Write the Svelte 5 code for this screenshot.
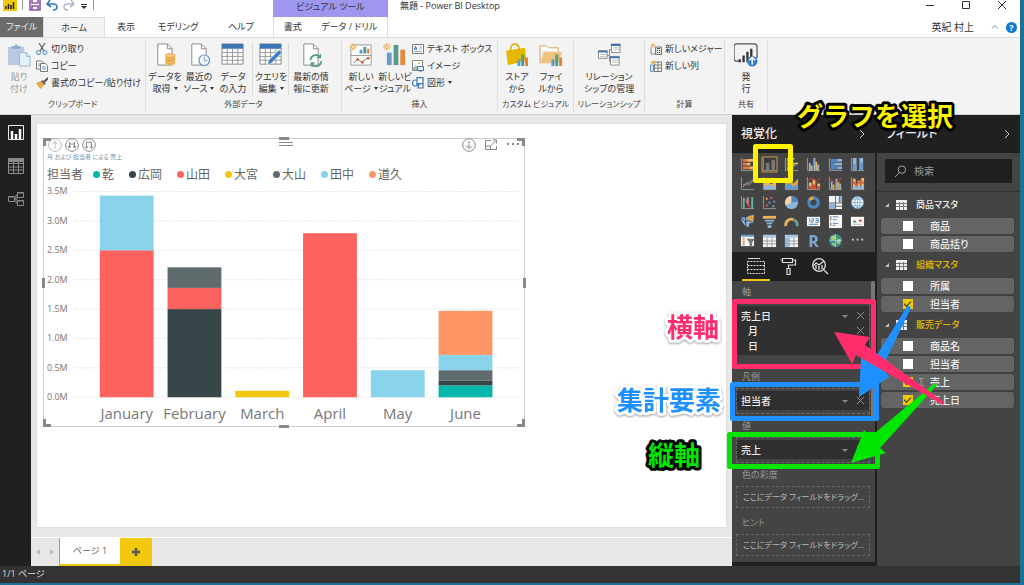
<script>
  /* ---------------------------------------------------------------------------------------------
   *  Report designer window: ribbon, report canvas, visualization pane and field list
   *-------------------------------------------------------------------------------------------- */

  const SHEET = '<path d="M5 1h10l5 5v17H5z" fill="#fff" stroke="#8a8a8a"/><path d="M15 1v5h5" fill="none" stroke="#8a8a8a"/>'
  const SPARK = '<path d="M4 0v8M0 4h8M1 1l6 6M7 1L1 7" stroke="#e9a94b"/><circle cx="4" cy="4" r="1.600" fill="#fff3dc" stroke="#e9a94b"/>'
  const MINI_BARS = '<path d="M13 17h3v7h-3z" fill="#5b9bd5"/><path d="M17 12h3v12h-3z" fill="#4f9d86"/><path d="M21 15h3v9h-3z" fill="#e5823a"/>'

  // 24 x 24 icons of the ribbon's tall buttons
  const bigIcons = {
    paste: '<path d="M1 4h17v19H1z" fill="#b9c9e4"/><path d="M5 3h3q1.500-4 3 0h3v3H5z" fill="#8fa9cf"/><path d="M13 10h7l4 4v10H13z" fill="#e4f1f6" stroke="#93b9cd"/><path d="M20 10v4h4" fill="none" stroke="#93b9cd"/>',
    getData: SHEET + '<path d="M13 13v9q5 3 10 0v-9z" fill="#efb455"/><ellipse cx="18" cy="13" rx="5" ry="2" fill="#f8d08c" stroke="#dfa040"/><path d="M13 17q5 3 10 0" fill="none" stroke="#dfa040"/>',
    recent: SHEET + '<circle cx="18" cy="18" r="5.500" fill="#f7fbff" stroke="#6f94c2" stroke-width="1.300"/><path d="M18 14v4.500h3.500" fill="none" stroke="#6f94c2"/>',
    enter: '<path d="M1 1h22v21H1z" fill="#fff" stroke="#888"/><path d="M1 1h22v5H1z" fill="#3b76b5"/><path d="M1 10h22M1 14h22M1 18h22M6.500 6v16M12 6v16M17.500 6v16" stroke="#999"/>',
    query: '<path d="M1 1h22v21H1z" fill="#fff" stroke="#888"/><path d="M1 1h22v5H1z" fill="#3b76b5"/><path d="M1 10h22M1 14h22M1 18h22M6.500 6v16M12 6v16M17.500 6v16" stroke="#999"/><path d="M9 23l1-5L21 7l3 3-11 11z" fill="#3b7fc4" stroke="#fff" stroke-width=".7"/>',
    refresh: SHEET + '<path d="M12 18a5.500 5.500 0 0 1 10-3M23 19a5.500 5.500 0 0 1-10 3" fill="none" stroke="#55a07c" stroke-width="2"/><path d="M23 11v5h-5zM12 25v-5h5z" fill="#55a07c"/>',
    newPage: '<path d="M4 2h19v21H2V6" fill="#fff" stroke="#999"/><path d="M2 13h21" stroke="#999"/><path d="M11 7h3v4h-3z" fill="#5b9bd5"/><path d="M15 4h3v7h-3z" fill="#4f9d86"/><path d="M19 6h2v5h-2z" fill="#d8743a"/><path d="M5 21l4-4 4 3 4-3 4-2" fill="none" stroke="#777"/><circle cx="9" cy="17" r="1.500" fill="#d8643a"/><circle cx="14" cy="20" r="1.500" fill="#d8643a"/><circle cx="20" cy="16" r="1.500" fill="#d8643a"/>' + SPARK,
    newVisual: '<path d="M4 10h5v13H4z" fill="#6a9bd0"/><path d="M11 2h5v21h-5z" fill="#569b87"/><path d="M18 7h5v16h-5z" fill="#e5893f"/>' + SPARK,
    store: '<path d="M1 8l20-3 1 14-19 4z" fill="#e6b800"/><path d="M6 10q-1-9 4-9t5 8" fill="none" stroke="#d9a900" stroke-width="1.500"/>' + MINI_BARS,
    file: '<path d="M1 6V3h7l2 2h10v5" fill="#fff" stroke="#d9a35a"/><path d="M1 21V5" stroke="#d9a35a"/><path d="M1 21L5 9h19l-4 12z" fill="#efc27f"/>' + MINI_BARS,
    relation: '<path d="M9 13h4V7h3M13 13v6h2" fill="none" stroke="#888"/><path d="M1.500 8h9v8h-9zM15 1h9v9h-9zM14 14h9v9h-9z" fill="#fff" stroke="#888"/><path d="M1 8h10v2H1zM14.500 1h10v2h-10zM13.500 14h10v2h-10z" fill="#3b76b5"/><path d="M3 12h6M3 14h6M17 5h6M17 7h6M16 18h6M16 20h6" stroke="#bbb"/>',
    publish: '<path d="M5 19H3q-3 0-3-3V4q0-3 3-3h18q3 0 3 3v12" fill="none" stroke="#555" stroke-width="1.300"/><path d="M6 17v3M10 13v7M14 9v11M18 6v9" stroke="#333" stroke-width="2.400"/><circle cx="19" cy="19" r="5.500" fill="#3a7fc1"/><path d="M19 22.500v-7M16 18l3-3 3 3" fill="none" stroke="#fff" stroke-width="1.500"/>'
  }

  // 12 x 12 icons of the ribbon's one-line buttons
  const smallIcons = {
    cut: '<path d="M3 0l5 8M9 0L4 8" stroke="#666" stroke-width="1.300"/><circle cx="2.500" cy="9.500" r="2" fill="none" stroke="#4d88c4"/><circle cx="9" cy="9.500" r="2" fill="none" stroke="#4d88c4"/>',
    copy: '<path d="M.5 1h5l2 2v6h-7z" fill="#fff" stroke="#777"/><path d="M4.500 3.500h5l2 2v6h-7z" fill="#fff" stroke="#777"/><path d="M6 7h4M6 9h4M2 4h2M2 6h2" stroke="#5b8fc9"/>',
    brush: '<path d="M0 6l5-2 3 4-3 4q-3-2-5-6z" fill="#e9a94b"/><path d="M5 4l2-1 3 4-2 1z" fill="#666"/><path d="M8 5l4-4" stroke="#555" stroke-width="2"/>',
    textbox: '<path d="M.5 1.500h11v9H.5z" fill="#fff" stroke="#777"/><path d="M2 7l1.500-4L5 7M2.500 6h2" fill="none" stroke="#3b76b5"/><path d="M7 4h3M7 6h3M2 8.500h8" stroke="#aaa"/>',
    image: '<path d="M.5.500h10v10H.5z" fill="#fff" stroke="#888"/><path d="M1 8l3-3 3 3v2H1z" fill="#9cc3b5"/><circle cx="7" cy="3" r="1" fill="#e9a94b"/><path d="M5.500 6.500h6v4h-6z" fill="#e8f2fb" stroke="#3b76b5"/><path d="M7 12h3" stroke="#3b76b5"/>',
    shapes: '<circle cx="3.500" cy="6" r="3" fill="#fff" stroke="#3b76b5" stroke-width="1.200"/><path d="M5 .600h6v6H5z" fill="#fff" stroke="#3b76b5" stroke-width="1.200"/><path d="M4 7h3l-1 4h5V7" fill="none" stroke="#3b76b5" stroke-width="1.200"/>',
    measure: '<path d="M1 4v7h4" fill="none" stroke="#888"/><path d="M5.500 4h6v7.500h-6z" fill="#ddd" stroke="#777"/><path d="M7 5.500h3M7 7.500h1M9 7.500h1M7 9.500h1M9 9.500h1" stroke="#555"/><path d="M3 0v5M.5 2.500h5M1 1l4 3M5 1L1 4" stroke="#e9a94b" stroke-width=".7"/>',
    column: '<path d="M4.500 2h7v9.500h-7z" fill="#fff" stroke="#777"/><path d="M4 5h8M4 8h8M8 2v9" stroke="#777"/><path d="M.5 5h3v6.500h-3z" fill="#cfe3f3" stroke="#6a9bd0"/><path d="M3 0v5M.5 2.500h5M1 1l4 3M5 1L1 4" stroke="#e9a94b" stroke-width=".7"/>'
  }

  const ribbon = [
    {
      name: 'クリップボード',
      kind: 'clipboard',
      big: [{ icon: 'paste', lines: ['貼り', '付け'], disabled: true }],
      small: [
        { icon: 'cut', label: '切り取り' },
        { icon: 'copy', label: 'コピー' },
        { icon: 'brush', label: '書式のコピー/貼り付け' }
      ]
    },
    {
      name: '外部データ',
      kind: 'external',
      big: [
        { icon: 'getData', lines: ['データを', '取得'], menu: true },
        { icon: 'recent', lines: ['最近の', 'ソース'], menu: true },
        { icon: 'enter', lines: ['データ', 'の入力'] },
        { icon: 'query', lines: ['クエリを', '編集'], menu: true, split: true },
        { icon: 'refresh', lines: ['最新の情', '報に更新'], split: true, wide: true }
      ]
    },
    {
      name: '挿入',
      kind: 'insert',
      big: [
        { icon: 'newPage', lines: ['新しい', 'ページ'], menu: true },
        { icon: 'newVisual', lines: ['新しいビ', 'ジュアル'] }
      ],
      small: [
        { icon: 'textbox', label: 'テキスト ボックス' },
        { icon: 'image', label: 'イメージ' },
        { icon: 'shapes', label: '図形', menu: true }
      ]
    },
    {
      name: 'カスタム ビジュアル',
      kind: 'custom',
      big: [
        { icon: 'store', lines: ['ストア', 'から'] },
        { icon: 'file', lines: ['ファイ', 'ルから'] }
      ]
    },
    {
      name: 'リレーションシップ',
      kind: 'relations',
      big: [{ icon: 'relation', lines: ['リレーション', 'シップの管理'], wide: true }]
    },
    {
      name: '計算',
      kind: 'calc',
      small: [
        { icon: 'measure', label: '新しいメジャー' },
        { icon: 'column', label: '新しい列' }
      ]
    },
    { name: '共有', kind: 'share', big: [{ icon: 'publish', lines: ['発', '行'] }] }
  ]

  const people = [
    { name: '乾', color: '#01b8aa' },
    { name: '広岡', color: '#374649' },
    { name: '山田', color: '#fd625e' },
    { name: '大宮', color: '#f2c80f' },
    { name: '大山', color: '#5f6b6d' },
    { name: '田中', color: '#8ad4eb' },
    { name: '道久', color: '#fe9666' }
  ]

  // sales per month, stacked bottom up: [index in people, millions]
  const months = [
    { name: 'January', parts: [[2, 2.5], [5, 0.93]] },
    { name: 'February', parts: [[1, 1.5], [2, 0.36], [4, 0.35]] },
    { name: 'March', parts: [[3, 0.11]] },
    { name: 'April', parts: [[2, 2.79]] },
    { name: 'May', parts: [[5, 0.46]] },
    { name: 'June', parts: [[0, 0.2], [1, 0.08], [4, 0.18], [5, 0.26], [6, 0.75]] }
  ]

  const ticks = [0, 0.5, 1, 1.5, 2, 2.5, 3, 3.5]
  const BASE = 212
  const UNIT = 59
  const bars = months.map((month, i) => {
    let total = 0
    const rects = month.parts.map(([who, value]) => {
      total += value
      return { y: BASE - total * UNIT, height: value * UNIT, color: people[who].color }
    })
    return { name: month.name, x: 56 + i * 68, rects }
  })

  const AXES = '<path d="M1.500 1v13.500H15" fill="none" stroke="#999"/>'
  const GRID = '<path d="M1 2h14v13H1z" fill="#f4f4f4"/><path d="M1 2h14v3H1z" fill="#a8c6e6"/><path d="M1 8.500h14M1 11.500h14M5.500 5v10M10.500 5v10" stroke="#9a9a9a"/>'
  const visuals = [
    { name: '積み上げ横棒', art: AXES + '<path d="M3 2h5v3H3zM3 6h4v3H3zM3 10h7v3H3z" fill="#e87b3e"/><path d="M8 2h6v3H8zM7 6h4v3H7zM10 10h5v3h-5z" fill="#f3b46a"/>' },
    { name: '積み上げ縦棒', art: '<path d="M0 0h16v16H0z" fill="#3a3a3a" stroke="#d9a640"/>' + AXES + '<path d="M4 6h4v8H4zM10 3h4v11h-4z" fill="#777"/>', selected: true },
    { name: '集合横棒', art: AXES + '<path d="M3 1h8v2H3zM3 6h12v2H3zM3 11h7v2H3z" fill="#e8b35b"/><path d="M3 3h5v2H3zM3 8h9v2H3zM3 13h4v2H3z" fill="#5b9bd5"/>' },
    { name: '集合縦棒', art: AXES + '<path d="M3 6h2v8H3zM8 1h2v13H8zM12 8h2v6h-2z" fill="#8db5dd"/><path d="M5 9h2v5H5zM10 5h2v9h-2z" fill="#e8b35b"/>' },
    { name: '100% 横棒', art: AXES + '<path d="M3 2h12v3H3zM3 6h12v3H3zM3 10h12v3H3z" fill="#8db5dd"/><path d="M3 2h7v3H3zM3 6h4v3H3zM3 10h8v3H3z" fill="#4d86c1"/>' },
    { name: '100% 縦棒', art: AXES + '<path d="M3 1h4v13H3zM10 1h4v13h-4z" fill="#8db5dd"/><path d="M3 8h4v6H3zM10 6h4v8h-4z" fill="#6d9acb"/>' },
    { name: '折れ線', art: AXES + '<path d="M3 12l4-5 3 2 5-6" fill="none" stroke="#8db5dd"/><path d="M3 9l4 1 4-5 4 1" fill="none" stroke="#c9744a"/>' },
    { name: '面', art: AXES + '<path d="M2 14V8l4-3 4 4 5-5v10z" fill="#e8b35b"/><path d="M2 14v-3l5-2 8 3v2z" fill="#8db5dd"/>' },
    { name: '積み上げ面', art: AXES + '<path d="M2 14V7l4-4 4 5 5-5v11z" fill="#e8a23b"/><path d="M2 14v-4l4-3 4 5 5-4v6z" fill="#5b9bd5"/>' },
    { name: '折れ線と積み上げ', art: AXES + '<path d="M3 7h3v7H3zM7 4h3v10H7zM12 8h3v6h-3z" fill="#f3b46a"/><path d="M3 11h3v3H3zM7 9h3v5H7zM12 11h3v3h-3z" fill="#d94b2e"/><path d="M2 5l5-3 4 5 4-5" fill="none" stroke="#d94b2e"/>' },
    { name: '折れ線と集合', art: AXES + '<path d="M3 6h2v8H3zM8 3h2v11H8zM12 8h2v6h-2z" fill="#8db5dd"/><path d="M5 9h2v5H5zM10 6h2v8h-2z" fill="#e8a23b"/><path d="M2 4l6 3 7-5" fill="none" stroke="#d94b2e"/>' },
    { name: 'リボン', art: AXES + '<path d="M3 3h3v11H3zM8 5h3v9H8zM12 2h3v12h-3z" fill="#f3b46a"/><path d="M3 5l4 3 4-4 4 3v2l-4-2-4 4-4-3z" fill="#d9633a"/><path d="M3 11h12v3H3z" fill="#8db5dd"/>' },
    { name: 'ウォーターフォール', art: AXES + '<path d="M3 3h2v11H3zM12 2h2v12h-2z" fill="#69b39c"/><path d="M5 4h2l4 9H9z" fill="#d9533a"/><path d="M8 2h1v7H8z" fill="#ddd"/>' },
    { name: '散布図', art: AXES + '<circle cx="5" cy="4" r="1.200" fill="#e8a23b"/><circle cx="10" cy="3" r="1.200" fill="#d9633a"/><circle cx="8" cy="8" r="1.200" fill="#5b9bd5"/><circle cx="13" cy="7" r="1.200" fill="#5b9bd5"/><circle cx="5" cy="11" r="1.200" fill="#d9633a"/><circle cx="12" cy="12" r="1.200" fill="#69b39c"/>' },
    { name: '円', art: '<circle cx="8" cy="8" r="7" fill="#8db5dd"/><path d="M8 8V1a7 7 0 0 0-6 10z" fill="#f5d6a5"/><path d="M8 8V1a7 7 0 0 1 7 6z" fill="#4d86c1"/>' },
    { name: 'ドーナツ', art: '<circle cx="8" cy="8" r="5" fill="none" stroke="#4d86c1" stroke-width="3.500"/><path d="M4 5a5 5 0 0 1 4-2" fill="none" stroke="#e8a23b" stroke-width="3.500"/>' },
    { name: 'ツリーマップ', art: '<path d="M1 1h14v14H1z" fill="#f4f4f4"/><path d="M1 9h7v6H1zM12 1h3v7h-3z" fill="#8db5dd"/><path d="M8 1v14M1 8.500h14M12 1v7M8 12h7" stroke="#666"/>' },
    { name: 'マップ', art: '<circle cx="8" cy="8" r="6.500" fill="#eef6fb" stroke="#5b9bd5"/><path d="M8 1v14M1 8h14M3 4.500h10M3 11.500h10M8 1q-6 7 0 14M8 1q6 7 0 14" fill="none" stroke="#79a9bd" stroke-width=".8"/>' },
    { name: '塗り分け地図', art: '<path d="M1 3l5 1 4-2 5-1-1 8-4 1-1 4-4-2-3-4z" fill="#8db5dd"/><path d="M9 2l6-1-1 5-5 2z" fill="#e8a23b"/><path d="M1 3l4 5 5-1 3 2M6 4v10" fill="none" stroke="#444"/>' },
    { name: 'じょうご', art: '<path d="M1 2h14v3H1z" fill="#e8b35b"/><path d="M3 6h10v2H3zM5 9h6v2H5zM6 12h4v3H6z" fill="#8db5dd"/>' },
    { name: 'ゲージ', art: '<path d="M2 13a6 6 0 0 1 8-7" fill="none" stroke="#e8b35b" stroke-width="3"/><path d="M10 6a6 6 0 0 1 4 7" fill="none" stroke="#69a58f" stroke-width="3"/>' },
    { name: 'カード', art: '<path d="M1 3h14v10H1z" fill="#f7f7f7"/><path d="M3 5h1v4M6 5h2v2H6v2h2M10 5h3v4h-3M10 7h3M3 11h10" fill="none" stroke="#4d86c1"/>' },
    { name: '複数の行カード', art: '<path d="M1 1h14v14H1z" fill="#f7f7f7"/><path d="M3 2v5M3 9v4" stroke="#666"/><path d="M5 3h6M5 6h4M5 10h6M5 12h3" stroke="#5b7fb5"/>' },
    { name: 'KPI', art: '<path d="M1 3h14v10H1z" fill="#f7f7f7"/><path d="M3 9l2-3 2 3z" fill="#3c9477"/><path d="M9 6h4l-2 3z" fill="#d9332e"/><path d="M3 11h10" stroke="#bbb"/>' },
    { name: 'スライサー', art: '<path d="M1 2h14v12H1z" fill="#f7f7f7"/><path d="M1 2h14v2H1z" fill="#5b9bd5"/><path d="M3 6h2M3 9h2M3 12h2" stroke="#e8823b" stroke-width="2"/><path d="M7 6h9l-3 4v5l-3-2v-3z" fill="#777"/>' },
    { name: 'テーブル', art: GRID },
    { name: 'マトリックス', art: GRID + '<path d="M1 5h4v10H1z" fill="#8db5dd"/>' },
    { name: 'R', r: true },
    { name: 'ArcGIS', art: '<circle cx="8" cy="8" r="7" fill="#3c8f8b"/><path d="M3 4l4-2 2 3-3 3-3-1zM10 6l4 1-2 5-3-2zM5 10l3 2-1 2-3-2z" fill="#a8d07a"/><path d="M2 8h12M8 1v14" stroke="#cfe6f0" stroke-width=".6"/>' },
    { name: 'その他', art: '<path d="M2 6h2v2H2zM7 6h2v2H7zM12 6h2v2h-2z" fill="#ccc"/>' }
  ]

  const wells = [
    { label: '軸', items: ['売上日', '月', '日'] },
    { label: '凡例', items: ['担当者'] },
    { label: '値', items: ['売上'] },
    { label: '色の彩度', items: [] },
    { label: 'ヒント', items: [] }
  ]

  let tables = $state([
    {
      name: '商品マスタ',
      used: false,
      fields: [
        { name: '商品', checked: false },
        { name: '商品括り', checked: false }
      ]
    },
    {
      name: '組織マスタ',
      used: true,
      fields: [
        { name: '所属', checked: false },
        { name: '担当者', checked: true }
      ]
    },
    {
      name: '販売データ',
      used: true,
      fields: [
        { name: '商品名', checked: false },
        { name: '担当者', checked: false },
        { name: '売上', checked: true, sum: true },
        { name: '売上日', checked: true }
      ]
    }
  ])
</script>

<div class="desktop">
  <div class="window">
    <header class="titlebar">
      <div class="quick">
        <svg class="logo" viewBox="0 0 14 14"><path d="M0 0h14v11H0z" fill="#f2c80f" /><path d="M3 6v3M5.500 4v5M8 5v4M10.500 2v7" stroke="#222" stroke-width="1.500" /></svg>
        <span class="bar"></span>
        <button aria-label="保存"><svg viewBox="0 0 14 14"><path d="M2 0v10h10V0M4 10V6h6v4M4 0v3h6V0" fill="none" stroke="#8d56a8" stroke-width="1.600" /></svg></button>
        <button aria-label="元に戻す"><svg viewBox="0 0 14 14"><path d="M5 0L2 4l4 3M2 4h6q4 0 4 3t-4 3" fill="none" stroke="#3a76b8" stroke-width="1.600" /></svg></button>
        <button aria-label="やり直し"><svg viewBox="0 0 14 14"><path d="M9 0l3 4-4 3M12 4H6Q2 4 2 7t4 3" fill="none" stroke="#a9bdd0" stroke-width="1.600" /></svg></button>
        <button aria-label="カスタマイズ"><svg viewBox="0 0 14 14"><path d="M2 4.500h6" stroke="#333" /><path d="M2 6h6l-3 3z" fill="#333" /></svg></button>
        <span class="bar last"></span>
      </div>
      <div class="tool">ビジュアル ツール</div>
      <h1>無題 - Power BI Desktop</h1>
      <div class="controls">
        <button aria-label="最小化"><svg viewBox="0 0 10 10"><path d="M1 5.500h8" stroke="#333" /></svg></button>
        <button aria-label="最大化"><svg viewBox="0 0 10 10"><path d="M1.500 1.500h7v7h-7z" fill="none" stroke="#333" /></svg></button>
        <button aria-label="閉じる"><svg viewBox="0 0 10 10"><path d="M1 1l8 8M9 1L1 9" stroke="#333" /></svg></button>
      </div>
    </header>

    <nav class="tabs">
      <button class="file">ファイル</button>
      <button class="home">ホーム</button>
      <button class="view">表示</button>
      <button class="model">モデリング</button>
      <button class="help">ヘルプ</button>
      <div class="context">
        <button>書式</button>
        <button>データ / ドリル</button>
      </div>
      <div class="account">
        <span>英紀 村上</span>
        <button aria-label="リボンを折りたたむ"><svg viewBox="0 0 10 10"><path d="M2 6.500l3-3 3 3" fill="none" stroke="#888" /></svg></button>
        <button class="info" aria-label="ヘルプ">?</button>
      </div>
    </nav>

    <div class="ribbon">
      {#each ribbon as group}
        <section class="group {group.kind}">
          <div class="commands">
            {#each group.big ?? [] as item}
              <button class="big" class:split={item.split} class:wide={item.wide} disabled={item.disabled}>
                <svg viewBox="0 0 25 25">{@html bigIcons[item.icon]}</svg>
                <span>{item.lines[0]}</span>
                <span>{item.lines[1]}{#if item.menu}<i class="caret"></i>{/if}</span>
              </button>
            {/each}
            {#if group.small}
              <div class="stack">
                {#each group.small as item}
                  <button class="small">
                    <svg viewBox="0 0 12 12">{@html smallIcons[item.icon]}</svg>
                    <span>{item.label}{#if item.menu}<i class="caret"></i>{/if}</span>
                  </button>
                {/each}
              </div>
            {/if}
          </div>
          <h2>{group.name}</h2>
        </section>
      {/each}
    </div>

    <main>
      <nav class="views">
        <button aria-label="レポート"><svg viewBox="0 0 16 16"><path d="M.5.500h15v14H.5z" fill="none" stroke="#eee" /><path d="M4 6v8M8 9v5M12 4v10" stroke="#fff" stroke-width="2.500" /></svg></button>
        <button aria-label="データ"><svg viewBox="0 0 16 16"><path d="M.5.500h15v15H.5zM.5 5.500h15M.5 9h15M.5 12h15M5.500 4v11M10.500 4v11" fill="none" stroke="#8a8a8a" /><path d="M0 0h16v4H0z" fill="#8a8a8a" /></svg></button>
        <button aria-label="リレーションシップ"><svg viewBox="0 0 16 16"><path d="M.5 5.500h6v5h-6zM9.500 1.500h6v5h-6zM9.500 9.500h6v5h-6zM6.500 8h3M8 8V4h1.500M8 8v4h1.500M.5 6h6M9.500 2h6M9.500 10h6" fill="none" stroke="#8a8a8a" /></svg></button>
      </nav>

      <div class="canvas">
        <div class="page">
          <article class="visual">
            <div class="visual-head">
              <button aria-label="ドリルアップ" class="faded"><svg viewBox="0 0 14 14"><circle cx="7" cy="7" r="6.300" /><path d="M7 11V3.500M4 6.500l3-3 3 3" /></svg></button>
              <button aria-label="次のレベル"><svg viewBox="0 0 14 14"><circle cx="7" cy="7" r="6.300" /><path d="M4.500 4v6M9.500 4v6M3 8l1.500 2L6 8M8 8l1.500 2L11 8M4.500 6h5" /></svg></button>
              <button aria-label="すべて展開"><svg viewBox="0 0 14 14"><circle cx="7" cy="7" r="6.300" /><path d="M4.500 10V4h5v6M3 8.500l1.500 2 1.500-2M8 8.500l1.500 2 1.500-2" /></svg></button>
              <svg class="grip" viewBox="0 0 14 14"><path d="M0 4.500h14M0 7.500h14" /></svg>
              <div class="options">
                <button aria-label="ドリルダウン"><svg viewBox="0 0 14 14"><circle cx="7" cy="7" r="6.300" /><path d="M7 3v7.500M4 7.500l3 3 3-3" /></svg></button>
                <button aria-label="フォーカス モード"><svg viewBox="0 0 14 14"><path d="M7 2.500H1.500v9h11V8M1.500 8h5v3.500M7 7.500l5-5M9 2h3.500v3.500" /></svg></button>
                <button aria-label="その他のオプション"><svg viewBox="0 0 14 14"><path d="M1 6h2M6 6h2M11 6h2" stroke-width="2" /></svg></button>
              </div>
            </div>
            <h3>月 および 担当者 による 売上</h3>
            <ul class="legend">
              <li class="legend-title">担当者</li>
              {#each people as person}
                <li><i style="background: {person.color}"></i>{person.name}</li>
              {/each}
            </ul>
            <svg class="plot" viewBox="0 0 482 241">
              {#each ticks as tick}
                <line x1="30" x2="478" y1={BASE - tick * UNIT} y2={BASE - tick * UNIT} />
                <text class="tick" x="3" y={BASE + 3 - tick * UNIT}>{tick.toFixed(1)}M</text>
              {/each}
              {#each bars as bar}
                {#each bar.rects as rect}
                  <rect x={bar.x} y={rect.y} width="54" height={rect.height} fill={rect.color} />
                {/each}
                <text class="month" x={bar.x + 27} y="234">{bar.name}</text>
              {/each}
            </svg>
            <i class="corner tl"></i><i class="corner tr"></i><i class="corner bl"></i><i class="corner br"></i>
            <i class="edge top"></i><i class="edge bottom"></i><i class="edge left"></i><i class="edge right"></i>
          </article>
        </div>
        <div class="pages">
          <button class="step" aria-label="前のページ"><svg viewBox="0 0 6 8"><path d="M5 1v6L1 4z" fill="#bbb" /></svg></button>
          <button class="step" aria-label="次のページ"><svg viewBox="0 0 6 8"><path d="M1 1v6l4-3z" fill="#bbb" /></svg></button>
          <button class="current">ページ 1</button>
          <button class="add" aria-label="新しいページ"><svg viewBox="0 0 10 10"><path d="M5 1v8M1 5h8" stroke="#555" stroke-width="2.500" /></svg></button>
        </div>
      </div>

      <div class="panels">
        <aside class="visualizations">
          <header class="panel-head">
            <h2>視覚化</h2>
            <button aria-label="折りたたむ"><svg viewBox="0 0 8 10"><path d="M2 1l4 4-4 4" fill="none" stroke="#ccc" /></svg></button>
          </header>
          <div class="gallery">
            {#each visuals as visual}
              <button aria-label={visual.name} aria-pressed={!!visual.selected}>
                {#if visual.r}<b>R</b>{:else}<svg viewBox="0 0 16 16">{@html visual.art}</svg>{/if}
              </button>
            {/each}
          </div>
          <div class="modes">
            <button class="active" aria-label="フィールド"><svg viewBox="0 0 18 18"><path d="M1 1.500h12" stroke="#ddd" /><path d="M.5 4.500h17v12H.5zM.5 8.500h17M.5 12.500h17" fill="none" stroke="#ddd" stroke-dasharray="2 1" /></svg></button>
            <button aria-label="書式"><svg viewBox="0 0 18 18"><path d="M3.500 1.500h10v4h-10zM3.500 3h-2M13.500 3h3v5h-7v3M8 11.500h3v6H8z" fill="none" stroke="#ddd" stroke-width="1.200" /></svg></button>
            <button aria-label="分析"><svg viewBox="0 0 18 18"><circle cx="8" cy="8" r="6.300" fill="none" stroke="#ddd" stroke-width="1.300" /><path d="M13 13l4 4M2 9l3-3 3 2 5-4M5 8v4M8 9v4M11 8v4" fill="none" stroke="#ddd" stroke-width="1.300" /></svg></button>
          </div>
          <div class="wells">
            {#each wells as well}
              <section>
                <h3>{well.label}</h3>
                {#if well.items.length}
                  <div class="well" class:tall={well.items.length > 1}>
                    <ul>
                      {#each well.items as item, i}
                        <li class:child={i > 0}>
                          <span>{item}</span>
                          {#if i === 0}<button aria-label="メニュー"><i class="caret"></i></button>{/if}
                          <button aria-label="削除"><svg viewBox="0 0 10 10"><path d="M1 1l8 8M9 1L1 9" stroke="#999" /></svg></button>
                        </li>
                      {/each}
                    </ul>
                  </div>
                {:else}
                  <div class="well empty">ここにデータ フィールドをドラッグ...</div>
                {/if}
              </section>
            {/each}
            <i class="scroll"></i>
          </div>
        </aside>

        <aside class="fields">
          <header class="panel-head">
            <h2>フィールド</h2>
            <button aria-label="折りたたむ"><svg viewBox="0 0 8 10"><path d="M2 1l4 4-4 4" fill="none" stroke="#ccc" /></svg></button>
          </header>
          <div class="search">
            <label>
              <svg viewBox="0 0 14 14"><circle cx="8.500" cy="5" r="4" fill="none" stroke="#aaa" /><path d="M6 8l-5 5" stroke="#aaa" /></svg>
              <input type="text" placeholder="検索" aria-label="検索" />
            </label>
          </div>
          {#each tables as table, t}
            <h3 class:used={table.used}>
              <svg class="fold" viewBox="0 0 6 6"><path d="M5 1v4H1z" fill="#bbb" /></svg>
              <svg class="grid-icon" viewBox="0 0 11 10"><path d="M0 0h11v10H0z" fill="#eee" /><path d="M0 3.500h11M0 6.500h11M3.500 2v8M7.500 2v8" stroke="#777" /></svg>
              {table.name}
            </h3>
            <ul class="field-list">
              {#each table.fields as field, f}
                <li>
                  <input type="checkbox" id="field-{t}-{f}" bind:checked={field.checked} />
                  <span class="sum">{field.sum ? 'Σ' : ''}</span>
                  <label for="field-{t}-{f}">{field.name}</label>
                </li>
              {/each}
            </ul>
          {/each}
        </aside>

        <svg class="notes" viewBox="0 0 420 470">
          <g fill="none" stroke-width="5">
            <rect x="134.500" y="206.500" width="139" height="65" stroke="#ff2d6b" />
            <rect x="132.500" y="289.500" width="144" height="34" stroke="#1e90ff" />
            <rect x="129.500" y="339.500" width="148" height="32" stroke="#00e600" />
            <rect x="155.500" y="51.500" width="35" height="34" stroke="#fff200" />
          </g>
          <path d="M259 302L261 263 272 268 308 210 311 213 283 271 289 282z" fill="#1e90ff" />
          <path d="M251 368L264 335 270 342 335 288 337 290 280 353 286 358z" fill="#00e600" />
          <path d="M234 237L270 242 265 250 344 307 343 310 256 260 252 269z" fill="#ff2d6b" />
          <text class="yellow" x="197" y="31">グラフを選択</text>
          <text class="pink" x="67" y="242">横軸</text>
          <text class="blue" x="17" y="315">集計要素</text>
          <text class="green" x="48" y="370">縦軸</text>
        </svg>
      </div>
    </main>

    <footer>1/1 ページ</footer>
  </div>
</div>

<style>
  :global(body) {
    margin: 0;
  }

  .desktop {
    box-sizing: border-box;
    min-height: 100vh;
    padding: 0 4px 2px 0;
    display: flex;
    background: #1b7295;
    font-family: 'Open Sans', 'Noto Sans CJK JP', sans-serif;
    font-feature-settings: 'palt';
    font-size: 10px;
    line-height: 12px;
    color: #333;
  }

  .window {
    flex: 1;
    min-width: 0;
    display: flex;
    flex-direction: column;
    background: #fff;
  }

  button {
    padding: 0;
    border: 0;
    background: none;
    color: inherit;
    font: inherit;
    font-feature-settings: inherit;
    white-space: nowrap;
  }

  h1,
  h2,
  h3,
  ul {
    margin: 0;
    padding: 0;
    font-size: 10px;
    font-weight: 400;
    list-style: none;
  }

  svg {
    display: block;
  }

  .caret {
    display: inline-block;
    margin-left: 3px;
    vertical-align: 2px;
    border: 2px solid transparent;
    border-top: 3px solid currentColor;
    border-bottom: 0;
  }

  /* title bar and tabs */

  .titlebar {
    display: flex;
    height: 17px;
    font-size: 9px;
  }

  .quick {
    width: 273px;
    display: flex;
    align-items: flex-start;
    gap: 3px;
  }

  .quick svg {
    width: 14px;
    height: 14px;
  }

  .quick .logo {
    margin-left: 3px;
  }

  .quick .bar {
    width: 1px;
    height: 10px;
    margin: 0 2px;
    background: #999;
  }

  .quick .last {
    margin-left: -3px;
  }

  .tool {
    width: 115px;
    background: #9f97ef;
    text-align: center;
    line-height: 14px;
  }

  h1 {
    margin-left: 12px;
    font-size: 9px;
    line-height: 12px;
  }

  .controls {
    margin-left: auto;
    display: flex;
    align-items: flex-start;
  }

  .controls button {
    width: 36px;
    display: flex;
    justify-content: center;
  }

  .controls svg {
    width: 10px;
    height: 10px;
  }

  .tabs {
    display: flex;
    height: 20px;
    font-size: 9px;
  }

  .tabs > button {
    height: 20px;
  }

  .tabs .file {
    width: 43px;
    background: #6c6c6c;
    color: #eee;
  }

  .tabs .home {
    width: 62px;
    background: #f3f3f3;
    border: 1px solid #ddd;
    border-bottom: 0;
    box-sizing: border-box;
  }

  .tabs .view {
    width: 42px;
  }

  .tabs .model {
    width: 62px;
  }

  .tabs .help {
    width: 64px;
  }

  .context {
    width: 115px;
    box-sizing: border-box;
    display: flex;
    justify-content: space-around;
    border: solid #ddd;
    border-width: 0 1px;
  }

  .account {
    margin-left: auto;
    display: flex;
    align-items: center;
    gap: 16px;
    padding-right: 3px;
    font-size: 10px;
  }

  .account svg {
    width: 10px;
    height: 10px;
  }

  .account .info {
    width: 11px;
    height: 11px;
    margin-left: -10px;
    border-radius: 50%;
    background: #0f78cf;
    color: #fff;
    font-size: 9px;
    font-weight: 700;
    line-height: 11px;
  }

  /* ribbon */

  .ribbon {
    box-sizing: border-box;
    height: 78px;
    display: flex;
    background: #f3f3f3;
    border-top: 1px solid #dcdcdc;
    border-bottom: 1px solid #d0d0d0;
    font-size: 9px;
  }

  .group {
    box-sizing: border-box;
    display: flex;
    flex-direction: column;
    flex: none;
    margin: 2px 0;
    border-right: 1px solid #dedede;
  }

  .clipboard {
    width: 146px;
  }

  .external {
    width: 196px;
  }

  .insert {
    width: 156px;
  }

  .custom {
    width: 76px;
  }

  .relations {
    width: 71px;
  }

  .calc {
    width: 80px;
  }

  .share {
    width: 43px;
  }

  .commands {
    flex: 1;
    display: flex;
    padding: 3px 2px 0;
  }

  .group h2 {
    height: 14px;
    text-align: center;
    white-space: nowrap;
    font-size: 8px;
    color: #444;
  }

  .big {
    flex: none;
    width: 34px;
    display: flex;
    flex-direction: column;
    align-items: center;
  }

  .big.wide,
  .relations .big,
  .share .big {
    width: 42px;
  }

  .relations .commands,
  .share .commands {
    justify-content: center;
  }

  .big.split {
    margin-left: 2px;
    padding-left: 3px;
    border-left: 1px solid #dcdcdc;
    height: 52px;
  }

  .big svg {
    width: 24px;
    height: 24px;
    margin-bottom: 4px;
    flex: none;
  }

  .big:disabled {
    color: #999;
  }

  .stack {
    display: flex;
    flex-direction: column;
    gap: 5px;
  }

  .small {
    height: 12px;
    display: flex;
    align-items: center;
    gap: 3px;
  }

  .small svg {
    width: 12px;
    height: 12px;
  }

  .calc .stack {
    padding-left: 3px;
  }

  /* report */

  main {
    flex: 1;
    display: flex;
  }

  .views {
    width: 31px;
    padding-top: 10px;
    box-sizing: border-box;
    background: #202020;
    display: flex;
    flex-direction: column;
    align-items: center;
    gap: 17px;
  }

  .views svg {
    width: 16px;
    height: 16px;
  }

  .canvas {
    flex: 1;
    min-width: 0;
    display: flex;
    flex-direction: column;
    background: #e8e7e6;
  }

  .page {
    flex: 1;
    margin: 9px 6px 10px;
    background: #fff;
    box-shadow: 0 0 2px #ccc;
  }

  .visual {
    position: relative;
    box-sizing: border-box;
    width: 70%;
    margin: 14px 0 0 6px;
    border: 1px solid #ccc;
  }

  .visual-head {
    display: flex;
    align-items: center;
    gap: 3px;
    height: 12px;
    padding-left: 4px;
  }

  .visual-head svg {
    width: 14px;
    height: 14px;
    fill: none;
    stroke: #888;
  }

  .visual-head .faded {
    opacity: 0.6;
  }

  .visual-head .grip {
    margin: 0 auto;
    padding-left: 14px;
  }

  .options {
    display: flex;
    gap: 8px;
    padding-right: 4px;
  }

  .visual h3 {
    padding-left: 3px;
    font-size: 6px;
    color: #7890a8;
    line-height: 12px;
  }

  .legend {
    display: flex;
    align-items: center;
    gap: 15px;
    height: 23px;
    padding-left: 3px;
    color: #666;
    font-size: 12px;
    font-feature-settings: normal;
    white-space: nowrap;
  }

  .legend-title {
    margin-right: -5px;
  }

  .legend li {
    display: flex;
    align-items: center;
    gap: 2px;
  }

  .legend i {
    width: 7px;
    height: 7px;
    border-radius: 50%;
  }

  .plot {
    width: 100%;
    overflow: visible;
  }

  .plot line {
    stroke: #e6e6e6;
    stroke-dasharray: 2 1;
  }

  .plot text {
    fill: #777;
  }

  .plot .tick {
    font-size: 9px;
  }

  .plot .month {
    font-size: 15px;
    text-anchor: middle;
  }

  .corner,
  .edge {
    position: absolute;
    box-sizing: border-box;
  }

  .corner {
    width: 8px;
    height: 8px;
    border: 0 solid #888;
  }

  .tl {
    top: -1px;
    left: -1px;
    border-width: 3px 0 0 3px;
  }

  .tr {
    top: -1px;
    right: -1px;
    border-width: 3px 3px 0 0;
  }

  .bl {
    bottom: -1px;
    left: -1px;
    border-width: 0 0 3px 3px;
  }

  .br {
    bottom: -1px;
    right: -1px;
    border-width: 0 3px 3px 0;
  }

  .edge {
    width: 10px;
    height: 3px;
    background: #888;
  }

  .top,
  .bottom {
    left: calc(50% - 5px);
  }

  .top {
    top: -2px;
  }

  .bottom {
    bottom: -2px;
  }

  .left,
  .right {
    width: 3px;
    height: 10px;
    top: calc(50% - 5px);
  }

  .left {
    left: -2px;
  }

  .right {
    right: -2px;
  }

  .pages {
    display: flex;
    height: 28px;
    border-top: 1px solid #fff;
    font-size: 9px;
  }

  .step {
    width: 14px;
    display: flex;
    align-items: center;
    justify-content: center;
  }

  .step svg {
    width: 6px;
    height: 8px;
  }

  .current {
    width: 61px;
    background: #fff;
    border-left: 1px solid #999;
    border-bottom: 2px solid #f2c80f;
    color: #666;
  }

  .add {
    width: 32px;
    display: flex;
    align-items: center;
    justify-content: center;
    background: #f2c80f;
  }

  .add svg {
    width: 10px;
    height: 10px;
  }

  /* side panels */

  .panels {
    position: relative;
    display: flex;
    gap: 2px;
    background: #202020;
    color: #eee;
  }

  .visualizations,
  .fields {
    width: 143px;
    box-sizing: border-box;
  }

  .fields {
    background: #444;
  }

  .panel-head {
    height: 38px;
    padding: 0 9px;
    display: flex;
    align-items: center;
    justify-content: space-between;
    background: #202020;
  }

  .panel-head h2 {
    font-size: 12px;
    font-weight: 500;
  }

  .panel-head svg {
    width: 8px;
    height: 10px;
  }

  .gallery {
    display: grid;
    grid-template-columns: repeat(6, 1fr);
    grid-auto-rows: 19px;
    padding: 2px 6px 2px 4px;
    background: #444;
  }

  .gallery button {
    display: flex;
    align-items: center;
    justify-content: center;
  }

  .gallery svg {
    width: 15px;
    height: 15px;
    overflow: visible;
  }

  .gallery b {
    color: #7ba7d8;
    font-size: 16px;
  }

  .modes {
    display: flex;
    gap: 4px;
    height: 29px;
    padding-left: 10px;
  }

  .modes button {
    box-sizing: border-box;
    width: 28px;
    padding: 5px 5px 4px;
    border-bottom: 2px solid transparent;
  }

  .modes .active {
    border-color: #f2c80f;
  }

  .modes svg {
    width: 18px;
    height: 18px;
  }

  .wells {
    position: relative;
    display: flex;
    flex-direction: column;
    gap: 4px;
    padding: 3px 5px 3px 4px;
    background: #444;
  }

  .wells h3 {
    margin-bottom: 3px;
    padding-left: 6px;
    font-size: 9px;
    line-height: 16px;
    color: #999;
  }

  .well {
    padding: 2px 0 3px;
    border: 1px dashed #666;
  }

  .well.tall {
    padding-bottom: 9px;
  }

  .well ul {
    padding: 2px 4px;
    background: #303030;
    border-radius: 2px;
  }

  .well li {
    display: flex;
    align-items: center;
    gap: 8px;
    height: 15px;
  }

  .well li span {
    flex: 1;
    font-weight: 500;
  }

  .well .child {
    padding-left: 7px;
  }

  .well li .caret {
    color: #888;
    border-width: 3px 3px 0;
  }

  .well li svg {
    width: 9px;
    height: 9px;
  }

  .well.empty {
    margin-bottom: 3px;
    padding: 0 6px;
    font-size: 8px;
    line-height: 20px;
    color: #bbb;
    white-space: nowrap;
  }

  .scroll {
    position: absolute;
    top: 0;
    right: 0;
    width: 4px;
    height: 136px;
    background: #777;
    border-radius: 2px;
  }

  .search {
    padding: 6px 8px 8px;
    border-bottom: 1px solid #333;
  }

  .search label {
    display: flex;
    align-items: center;
    gap: 7px;
    height: 24px;
    padding-left: 9px;
    background: #202020;
  }

  .search svg {
    width: 13px;
    height: 13px;
    flex: none;
  }

  .search input {
    flex: 1;
    min-width: 0;
    padding: 0;
    border: 0;
    background: none;
    color: #eee;
    font: inherit;
  }

  .search input::placeholder {
    color: #999;
  }

  .fields h3 {
    display: flex;
    align-items: center;
    height: 26px;
    padding-left: 7px;
    font-size: 9px;
    font-weight: 500;
  }

  .fields .used {
    color: #e3b505;
  }

  .fold {
    width: 6px;
    height: 6px;
    margin-right: 6px;
  }

  .grid-icon {
    width: 11px;
    height: 10px;
    margin-right: 9px;
  }

  .field-list {
    display: flex;
    flex-direction: column;
    gap: 2px;
    padding: 0 6px 0 4px;
  }

  .field-list li {
    display: flex;
    align-items: center;
    height: 16px;
    padding-left: 22px;
    background: #646464;
    border-radius: 2px;
    box-shadow: 0 0 1px #222;
  }

  .field-list input {
    appearance: none;
    width: 10px;
    height: 10px;
    margin: 0;
    background: #fff;
  }

  .field-list input:checked {
    background: #f2c80f;
  }

  .field-list input:checked::before {
    content: '';
    display: block;
    width: 6px;
    height: 3px;
    margin: 2px 1px;
    border: solid #333;
    border-width: 0 0 1px 1px;
    transform: rotate(-45deg);
  }

  .sum {
    width: 17px;
    text-align: center;
    color: #aaa;
  }

  .field-list label {
    font-weight: 500;
  }

  /* hand-drawn guidance over the panels */

  .notes {
    position: absolute;
    top: -20px;
    right: 0;
    width: 420px;
    height: 470px;
    pointer-events: none;
    stroke-linejoin: round;
  }

  .notes text {
    font-family: 'Noto Sans CJK JP', sans-serif;
    font-feature-settings: normal;
    font-size: 26px;
    font-weight: 700;
    paint-order: stroke;
    stroke-width: 6px;
    stroke: #fff;
  }

  .notes .yellow {
    fill: #fff200;
    stroke: #000;
  }

  .notes .pink {
    fill: #ff2d6b;
    filter: drop-shadow(0 1px 1px #999);
  }

  .notes .blue {
    fill: #1e90ff;
    filter: drop-shadow(0 1px 1px #999);
  }

  .notes .green {
    fill: #00e600;
    stroke: #000;
  }

  footer {
    height: 17px;
    padding-left: 2px;
    background: #333;
    color: #ddd;
    font-size: 9px;
    line-height: 16px;
  }
</style>
